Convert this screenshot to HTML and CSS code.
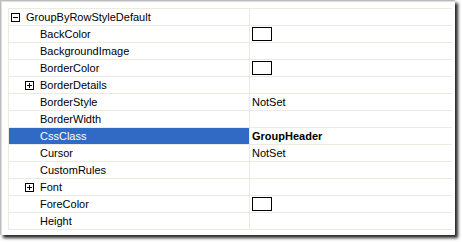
FILE: index.html
```html
<!DOCTYPE html>
<html>
<head>
<meta charset="utf-8">
<link rel="stylesheet" href="styles.css">
</head>
<body>
<div class="frame">
  <div class="grid">
    <div class="row header">
      <div class="name"><span class="box minus"></span><span class="label">GroupByRowStyleDefault</span></div>
      <div class="value"></div>
    </div>
    <div class="row">
      <div class="name prop">BackColor</div>
      <div class="value"><span class="swatch"></span></div>
    </div>
    <div class="row">
      <div class="name prop">BackgroundImage</div>
      <div class="value"></div>
    </div>
    <div class="row">
      <div class="name prop">BorderColor</div>
      <div class="value"><span class="swatch"></span></div>
    </div>
    <div class="row">
      <div class="name expand"><span class="box plus"></span><span class="label">BorderDetails</span></div>
      <div class="value"></div>
    </div>
    <div class="row">
      <div class="name prop">BorderStyle</div>
      <div class="value">NotSet</div>
    </div>
    <div class="row">
      <div class="name prop">BorderWidth</div>
      <div class="value"></div>
    </div>
    <div class="row selected">
      <div class="name prop">CssClass</div>
      <div class="value bold">GroupHeader</div>
    </div>
    <div class="row">
      <div class="name prop">Cursor</div>
      <div class="value">NotSet</div>
    </div>
    <div class="row">
      <div class="name prop">CustomRules</div>
      <div class="value"></div>
    </div>
    <div class="row">
      <div class="name expand"><span class="box plus"></span><span class="label">Font</span></div>
      <div class="value"></div>
    </div>
    <div class="row">
      <div class="name prop">ForeColor</div>
      <div class="value"><span class="swatch"></span></div>
    </div>
    <div class="row">
      <div class="name prop">Height</div>
      <div class="value"></div>
    </div>
  </div>
</div>
</body>
</html>
```
FILE: styles.css
```css
html, body {
  margin: 0;
  padding: 0;
  background: #ffffff;
}
body {
  width: 462px;
  height: 242px;
  overflow: hidden;
  font-family: "Liberation Sans", Arial, sans-serif;
  font-size: 11px;
  color: #000;
}
.frame {
  box-sizing: border-box;
  width: 455px;
  height: 235px;
  background: #fff;
  border-top: 1px solid #bdbdbd;
  border-left: 1px solid #bdbdbd;
  padding: 7px 0 0 7px;
  box-shadow: inset 1px 1px 0 #dedede, 3px 3px 3px 0 rgba(0,0,0,0.85);
}
.grid {
  width: 443px;
  border-top: 1px solid #ecebdd;
  border-left: 1px solid #ecebdd;
}
.row {
  display: flex;
  height: 16px;
  line-height: 16px;
  border-bottom: 1px solid #ecebdd;
}
.name {
  width: 240px;
  border-right: 1px solid #ecebdd;
  display: flex;
  align-items: center;
  white-space: nowrap;
}
.prop {
  padding-left: 31px;
  width: 209px;
}
.header .name {
  padding-left: 2px;
  width: 238px;
}
.expand {
  padding-left: 16px;
  width: 224px;
}
.label {
  margin-left: 6px;
}
.box {
  position: relative;
  box-sizing: border-box;
  width: 9px;
  height: 9px;
  border: 1px solid #000;
  flex: none;
}
.box::before {
  content: "";
  position: absolute;
  left: 1px;
  top: 3px;
  width: 5px;
  height: 1px;
  background: #000;
}
.plus::after {
  content: "";
  position: absolute;
  left: 3px;
  top: 1px;
  width: 1px;
  height: 5px;
  background: #000;
}
.value {
  flex: 1;
  padding-left: 2px;
  display: flex;
  align-items: flex-start;
  white-space: nowrap;
}
.bold {
  font-weight: bold;
}
.swatch {
  box-sizing: border-box;
  width: 20px;
  height: 14px;
  margin-top: 1px;
  border: 1px solid #000;
  background: #fff;
}
.selected .name {
  background: #316ac5;
  color: #fff;
}
```
